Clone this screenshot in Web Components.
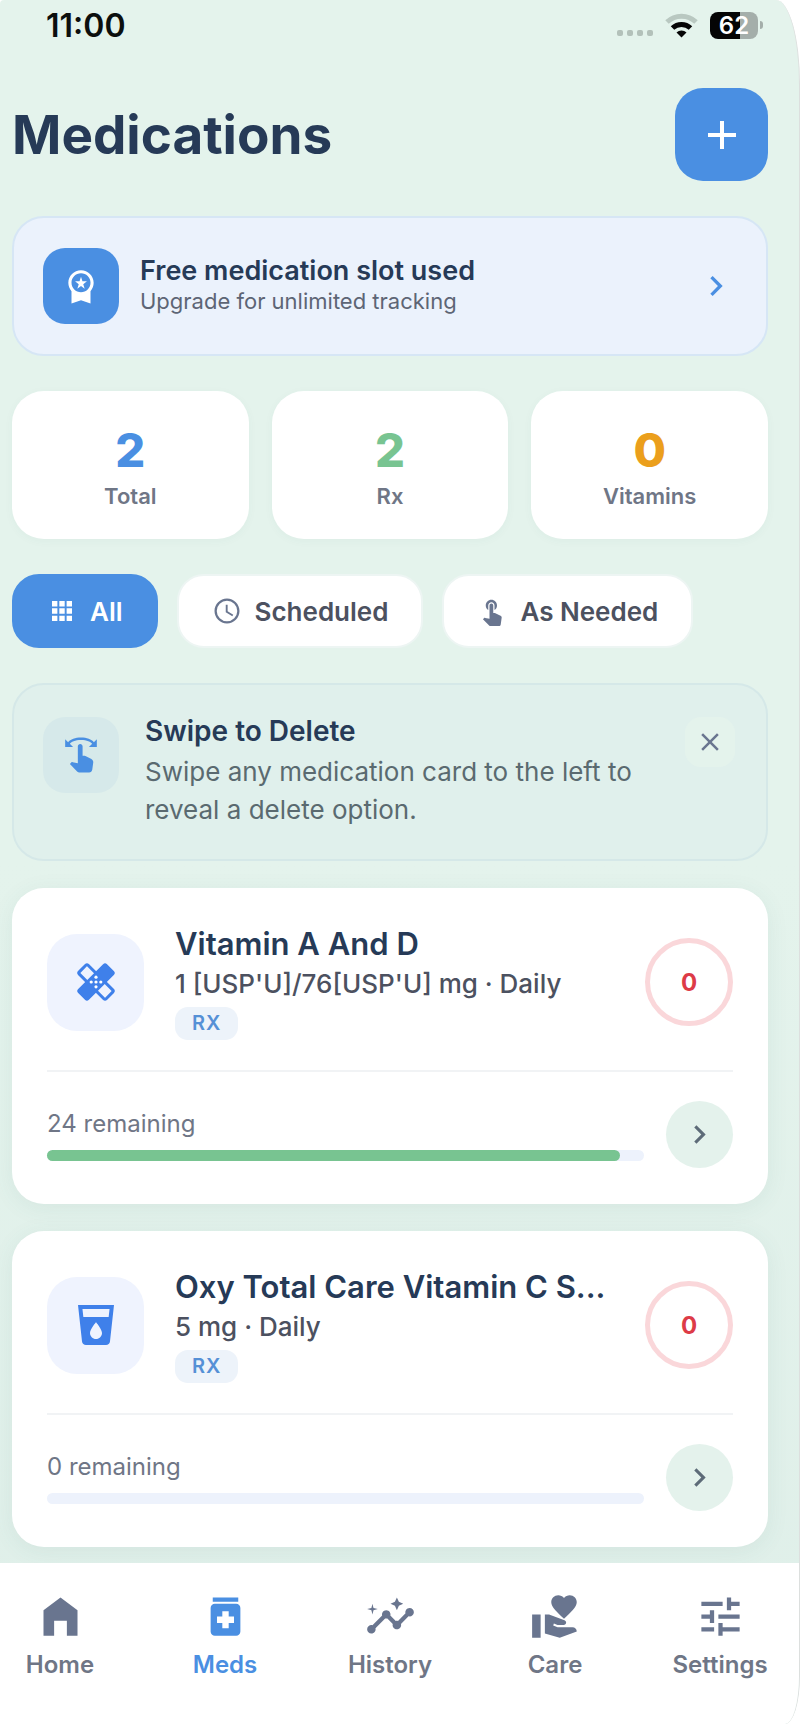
<!DOCTYPE html>
<html lang="en">
<head>
    <meta charset="UTF-8">
    <meta name="viewport" content="width=device-width, initial-scale=1.0">
    <title>Medications</title>
    <style>
        :root {
            --blue: #4a8fe2;
            --green: #78c491;
            --amber: #eb9f1c;
            --red: #dd3b47;
            --navy: #263a57;
            --text: #4c5160;
            --muted: #6f7686;
            --slate: #69758f;
            --mint: #e4f3ec;
        }

        body {
            margin: 0;
            background: #fff;
            font-family: Inter, "Liberation Sans", sans-serif;
            color: var(--text);
        }
    </style>
</head>
<body>
    <med-app>
        <status-bar slot="status" time="11:00" battery="62"></status-bar>
        <page-header>Medications</page-header>
        <upgrade-banner>
            Free medication slot used
            <span slot="detail">Upgrade for unlimited tracking</span>
        </upgrade-banner>
        <stat-row>
            <stat-card value="2" color="blue">Total</stat-card>
            <stat-card value="2" color="green">Rx</stat-card>
            <stat-card value="0" color="amber">Vitamins</stat-card>
        </stat-row>
        <filter-bar>
            <filter-chip icon="apps" active>All</filter-chip>
            <filter-chip icon="clock">Scheduled</filter-chip>
            <filter-chip icon="touch">As Needed</filter-chip>
        </filter-bar>
        <hint-card>
            <span slot="title">Swipe to Delete</span>
            Swipe any medication card to the left to reveal a delete option.
        </hint-card>
        <med-list>
            <med-card icon="bandage" tag="RX" streak="0" remaining="24" level="96">
                Vitamin A And D
                <span slot="dose">1 [USP'U]/76[USP'U] mg · Daily</span>
            </med-card>
            <med-card icon="drink" tag="RX" streak="0" remaining="0" level="0">
                Oxy Total Care Vitamin C S...
                <span slot="dose">5 mg · Daily</span>
            </med-card>
        </med-list>
        <tab-bar slot="tabs">
            <tab-item icon="home" href="#home">Home</tab-item>
            <tab-item icon="meds" href="#meds" active>Meds</tab-item>
            <tab-item icon="insights" href="#history">History</tab-item>
            <tab-item icon="care" href="#care">Care</tab-item>
            <tab-item icon="tune" href="#settings">Settings</tab-item>
        </tab-bar>
    </med-app>

    <script>
        const icons = {
            add: '<path d="M19 13h-6v6h-2v-6H5v-2h6V5h2v6h6z"/>',
            chevron: '<path d="M10 6 8.59 7.41 13.17 12l-4.58 4.59L10 18l6-6z"/>',
            close: '<path d="M19 6.41 17.59 5 12 10.59 6.41 5 5 6.41 10.59 12 5 17.59 6.41 19 12 13.41 17.59 19 19 17.59 13.41 12z"/>',
            premium: '<path d="M9.68 13.69 12 11.93l2.31 1.76-.88-2.85L15.75 9h-2.84L12 6.19 11.09 9H8.25l2.31 1.84zM20 10c0-4.42-3.58-8-8-8s-8 3.58-8 8c0 2.03.76 3.87 2 5.28V23l6-2 6 2v-7.72c1.24-1.41 2-3.25 2-5.28zm-8-6c3.31 0 6 2.69 6 6s-2.69 6-6 6-6-2.69-6-6 2.69-6 6-6z"/>',
            apps: '<path d="M4 4h4.3v4.3H4zM9.85 4h4.3v4.3h-4.3zM15.7 4H20v4.3h-4.3zM4 9.85h4.3v4.3H4zM9.85 9.85h4.3v4.3h-4.3zM15.7 9.85H20v4.3h-4.3zM4 15.7h4.3V20H4zM9.85 15.7h4.3V20h-4.3zM15.7 15.7H20V20h-4.3z"/>',
            clock: '<path d="M11.99 2C6.47 2 2 6.48 2 12s4.47 10 9.99 10C17.52 22 22 17.52 22 12S17.52 2 11.99 2zM12 20.2a8.2 8.2 0 1 1 0-16.4 8.2 8.2 0 0 1 0 16.4z"/><path d="M12.5 7H11v6l5.25 3.15.75-1.23-4.5-2.67z"/>',
            touch: '<path d="M9 11.24V7.5C9 6.12 10.12 5 11.5 5S14 6.12 14 7.5v3.74c1.21-.81 2-2.18 2-3.74C16 5.01 13.99 3 11.5 3S7 5.01 7 7.5c0 1.56.79 2.93 2 3.74zm9.84 4.63-4.54-2.26c-.17-.07-.35-.11-.54-.11H13v-6c0-.83-.67-1.5-1.5-1.5S10 6.67 10 7.5v10.74l-3.43-.72c-.08-.01-.15-.03-.24-.03-.31 0-.59.13-.79.33l-.79.8 4.94 4.94c.27.27.65.44 1.06.44h6.79c.75 0 1.33-.55 1.44-1.28l.75-5.27c.01-.07.02-.14.02-.2 0-.62-.38-1.16-.91-1.38z"/>',
            swipe: '<path d="m18.89 14.75-4.09-2.04c-.28-.14-.58-.21-.89-.21H13v-6c0-.83-.67-1.5-1.5-1.5S10 5.67 10 6.5v10.74l-3.25-.74c-.33-.07-.68.03-.92.28L5 17.62l4.54 4.79c.38.38.89.59 1.42.59h6.16c1 0 1.84-.73 1.98-1.72l.63-4.47c.12-.85-.32-1.69-1.09-2.06zM20.13 3.87C18.69 2.17 15.6 1 12 1S5.31 2.17 3.87 3.87L2 2v5h5L4.93 4.93C5.62 3.71 8.41 2.5 12 2.5s6.38 1.21 7.07 2.43L17 7h5V2z"/>',
            bandage: '<g transform="rotate(45 12 12)"><rect x="2.5" y="8.9" width="19" height="6.2" rx=".8" fill="none" stroke="currentColor" stroke-width="1.5"/></g><g transform="rotate(-45 12 12)"><rect x="1.8" y="8.2" width="20.4" height="7.6" rx="1.4"/></g><g fill="#fff"><circle cx="12" cy="12" r=".8"/><circle cx="12" cy="9.6" r=".8"/><circle cx="12" cy="14.4" r=".8"/><circle cx="9.6" cy="12" r=".8"/><circle cx="14.4" cy="12" r=".8"/></g>',
            drink: '<path d="m3 2 2.01 18.23C5.13 21.23 5.97 22 7 22h10c1.03 0 1.87-.77 1.99-1.77L21 2zm9 17c-1.66 0-3-1.34-3-3 0-2 3-5.4 3-5.4s3 3.4 3 5.4c0 1.66-1.34 3-3 3zm6.33-11H5.67l-.44-4h13.55z"/>',
            home: '<path d="M4 21V9l8-6 8 6v12h-5v-7H9v7z"/>',
            meds: '<path d="M6 3h12v2H6zM17 6H7c-1.1 0-2 .9-2 2v11c0 1.1.9 2 2 2h10c1.1 0 2-.9 2-2V8c0-1.1-.9-2-2-2zm-1 9h-2.5v2.5h-3V15H8v-3h2.5V9.5h3V12H16z"/>',
            insights: '<path d="M21 8c-1.45 0-2.26 1.44-1.93 2.51l-3.55 3.56c-.3-.09-.74-.09-1.04 0l-2.55-2.55C12.27 10.45 11.46 9 10 9c-1.45 0-2.27 1.44-1.93 2.52l-4.56 4.55C2.44 15.74 1 16.55 1 18c0 1.1.9 2 2 2 1.45 0 2.26-1.44 1.93-2.51l4.55-4.56c.3.09.74.09 1.04 0l2.55 2.55C12.73 16.55 13.54 18 15 18c1.45 0 2.27-1.44 1.93-2.52l3.56-3.55c1.07.33 2.51-.48 2.51-1.93 0-1.1-.9-2-2-2z"/><path d="m15 9 .94-2.07L18 6l-2.06-.93L15 3l-.92 2.07L12 6l2.08.93zM3.5 11 4 9l2-.5L4 8l-.5-2L3 8l-2 .5L3 9z"/>',
            care: '<path d="M1 11h4v11H1zM16 3.25C16.65 2.49 17.66 2 18.7 2 20.55 2 22 3.45 22 5.3c0 2.27-2.91 4.9-6 7.7-3.09-2.81-6-5.44-6-7.7C10 3.45 11.45 2 13.3 2c1.04 0 2.05.49 2.7 1.25zM20 17h-7l-2.09-.73.33-.94L13 16h2.82c.65 0 1.18-.53 1.18-1.18 0-.49-.31-.93-.77-1.11L8.97 11H7v9.02L14 22l8.01-3c-.01-1.1-.9-2-2.01-2z"/>',
            tune: '<path d="M3 17v2h6v-2zM3 5v2h10V5zm10 16v-2h8v-2h-8v-2h-2v6zM7 9v2H3v2h4v2h2V9zm14 4v-2H11v2zm-6-4h2V7h4V5h-4V3h-2z"/>'
        };

        const icon = (name, size) => `<svg width="${size}" height="${size}" viewBox="0 0 24 24" fill="currentColor" aria-hidden="true">${icons[name]}</svg>`;

        const base = `
            *, :host { box-sizing: border-box; }
            svg { display: block; flex: none; }
            button { font: inherit; border: 0; padding: 0; cursor: pointer; }
        `;

        // Renders the markup returned by template() into an open shadow root
        class BaseElement extends HTMLElement {
            constructor() {
                super();
                this.attachShadow({ mode: 'open' });
            }

            connectedCallback() {
                this.shadowRoot.innerHTML = `<style>${base}</style>${this.template()}`;
            }

            attr(name) {
                return this.getAttribute(name) || '';
            }
        }

        class MedApp extends BaseElement {
            template() {
                return `
                    <style>
                        :host {
                            display: flex;
                            flex-direction: column;
                            min-height: 100vh;
                            overflow: hidden;
                            background: linear-gradient(var(--mint) 50%, #dfefe9);
                            border-right: 1px solid #dcdfde;
                            border-radius: 4px 24px 15px 0 / 4px 84px 48px 0;
                        }
                        main {
                            display: flex;
                            flex-direction: column;
                            gap: 35px;
                            padding: 38px 31px 16px 12px;
                        }
                        slot[name="tabs"] { display: block; margin-top: auto; }
                    </style>
                    <slot name="status"></slot>
                    <main><slot></slot></main>
                    <slot name="tabs"></slot>
                `;
            }
        }

        class StatusBar extends BaseElement {
            template() {
                return `
                    <style>
                        :host {
                            display: flex;
                            align-items: center;
                            justify-content: space-between;
                            height: 50px;
                            padding: 0 36px 0 46px;
                            color: #0c0f0e;
                        }
                        time { font-size: 32px; font-weight: 600; }
                        .right { display: flex; align-items: center; gap: 12px; }
                        .battery {
                            display: flex;
                            align-items: center;
                            gap: 2px;
                        }
                        .level {
                            width: 48px;
                            height: 27px;
                            border-radius: 8px;
                            background: linear-gradient(90deg, #050505 ${this.attr('battery')}%, #a4aeaa 0);
                            color: #fff;
                            font-size: 24px;
                            font-weight: 600;
                            line-height: 27px;
                            text-align: center;
                        }
                        .tip { width: 3px; height: 8px; border-radius: 0 3px 3px 0; background: #a4aeaa; }
                    </style>
                    <time>${this.attr('time')}</time>
                    <div class="right">
                        <svg width="36" height="24" viewBox="0 0 36 24" fill="#b3c1ba" aria-hidden="true">
                            <rect y="17" width="6" height="6" rx="2"/><rect x="10" y="17" width="6" height="6" rx="2"/>
                            <rect x="20" y="17" width="6" height="6" rx="2"/><rect x="30" y="17" width="6" height="6" rx="2"/>
                        </svg>
                        <svg width="33" height="25" viewBox="0 0 33 25" fill="none" stroke-width="5" aria-hidden="true">
                            <path d="M2 9a21 21 0 0 1 29 0" stroke="#b9c8c1"/>
                            <path d="M7.5 15a13 13 0 0 1 18 0" stroke="#050505"/>
                            <path d="m16.5 24.5-5-5a7.5 7.5 0 0 1 10 0z" fill="#050505"/>
                        </svg>
                        <div class="battery"><div class="level">${this.attr('battery')}</div><div class="tip"></div></div>
                    </div>
                `;
            }
        }

        class PageHeader extends BaseElement {
            template() {
                return `
                    <style>
                        :host { display: flex; align-items: center; justify-content: space-between; }
                        h1 { margin: 0; color: var(--navy); font-size: 53px; font-weight: 700; line-height: 64px; }
                        button {
                            display: grid;
                            place-items: center;
                            width: 93px;
                            height: 93px;
                            border-radius: 28px;
                            background: var(--blue);
                            color: #fff;
                        }
                    </style>
                    <h1><slot></slot></h1>
                    <button type="button" aria-label="Add medication">${icon('add', 48)}</button>
                `;
            }
        }

        class UpgradeBanner extends BaseElement {
            template() {
                return `
                    <style>
                        :host { display: block; }
                        a {
                            display: flex;
                            align-items: center;
                            gap: 21px;
                            padding: 30px 30px 30px 29px;
                            border: 2px solid #d6e6f5;
                            border-radius: 32px;
                            background: #ebf2fc;
                            color: var(--blue);
                            text-decoration: none;
                        }
                        .badge {
                            display: grid;
                            place-items: center;
                            width: 76px;
                            height: 76px;
                            border-radius: 22px;
                            background: var(--blue);
                            color: #fff;
                        }
                        .copy { flex: 1; line-height: 30px; }
                        .title { color: var(--navy); font-size: 27px; font-weight: 600; }
                        .detail { color: #5d6575; font-size: 22px; }
                    </style>
                    <a href="#upgrade">
                        <div class="badge">${icon('premium', 38)}</div>
                        <div class="copy">
                            <div class="title"><slot></slot></div>
                            <div class="detail"><slot name="detail"></slot></div>
                        </div>
                        ${icon('chevron', 40)}
                    </a>
                `;
            }
        }

        class StatRow extends BaseElement {
            template() {
                return `
                    <style>
                        :host { display: grid; grid-template-columns: repeat(3, 1fr); gap: 23px; }
                    </style>
                    <slot></slot>
                `;
            }
        }

        class StatCard extends BaseElement {
            template() {
                return `
                    <style>
                        :host {
                            display: flex;
                            flex-direction: column;
                            align-items: center;
                            gap: 4px;
                            padding: 31px 12px 29px;
                            border-radius: 32px;
                            background: #fff;
                            box-shadow: 0 2px 10px rgba(60, 110, 100, .04);
                        }
                        .value { color: var(--${this.attr('color')}); font-size: 47px; font-weight: 800; line-height: 56px; }
                        .label { color: var(--muted); font-size: 22px; font-weight: 600; line-height: 28px; }
                    </style>
                    <div class="value">${this.attr('value')}</div>
                    <div class="label"><slot></slot></div>
                `;
            }
        }

        class FilterBar extends BaseElement {
            template() {
                return `
                    <style>
                        :host { display: flex; gap: 19px; }
                    </style>
                    <slot></slot>
                `;
            }
        }

        class FilterChip extends BaseElement {
            template() {
                return `
                    <style>
                        :host { display: block; }
                        button {
                            display: flex;
                            align-items: center;
                            gap: 13px;
                            height: 74px;
                            padding: 0 33px;
                            border: 2px solid #edf5f3;
                            border-radius: 27px;
                            background: #fff;
                            color: var(--text);
                            font-size: 26px;
                            font-weight: 600;
                        }
                        svg { color: var(--slate); }
                        :host([active]) button { border-color: var(--blue); background: var(--blue); color: #fff; }
                        :host([active]) svg { color: #fff; }
                    </style>
                    <button type="button">${icon(this.attr('icon'), 30)}<slot></slot></button>
                `;
            }
        }

        class HintCard extends BaseElement {
            template() {
                return `
                    <style>
                        :host {
                            display: flex;
                            align-items: flex-start;
                            gap: 26px;
                            padding: 32px 31px 30px 29px;
                            border: 2px solid #d5e8e8;
                            border-radius: 32px;
                            background: #e0f0ec;
                        }
                        .badge {
                            display: grid;
                            flex: none;
                            place-items: center;
                            width: 76px;
                            height: 76px;
                            border-radius: 22px;
                            background: #d6e9ea;
                            color: var(--blue);
                        }
                        .copy { flex: 1; }
                        h2 { margin: 0 0 8px; color: var(--navy); font-size: 28px; font-weight: 600; line-height: 28px; }
                        p { margin: 0; color: #5a6a70; font-size: 26px; line-height: 38px; }
                        button {
                            display: grid;
                            place-items: center;
                            width: 50px;
                            height: 50px;
                            border-radius: 16px;
                            background: var(--mint);
                            color: var(--slate);
                        }
                    </style>
                    <div class="badge">${icon('swipe', 38)}</div>
                    <div class="copy">
                        <h2><slot name="title"></slot></h2>
                        <p><slot></slot></p>
                    </div>
                    <button type="button" aria-label="Dismiss">${icon('close', 30)}</button>
                `;
            }
        }

        class MedList extends BaseElement {
            template() {
                // the list sits closer to the hint above than the other sections do
                return `
                    <style>
                        :host { display: flex; flex-direction: column; gap: 27px; margin-top: -8px; }
                    </style>
                    <slot></slot>
                `;
            }
        }

        class MedCard extends BaseElement {
            template() {
                return `
                    <style>
                        :host {
                            display: block;
                            padding: 36px 35px;
                            border-radius: 32px;
                            background: #fff;
                            box-shadow: 0 4px 22px rgba(60, 110, 110, .08);
                        }
                        .top { display: flex; align-items: center; }
                        .icon {
                            display: grid;
                            flex: none;
                            place-items: center;
                            width: 97px;
                            height: 97px;
                            margin-right: 31px;
                            border-radius: 30px;
                            background: #eff3fe;
                            color: #3f80ea;
                        }
                        .copy { flex: 1; min-width: 0; }
                        h3, .dose { overflow: hidden; line-height: 40px; text-overflow: ellipsis; white-space: nowrap; }
                        h3 { margin: 0; color: var(--navy); font-size: 31px; font-weight: 600; }
                        .dose { font-size: 26px; font-weight: 500; }
                        .tag {
                            display: block;
                            width: max-content;
                            margin-top: 3px;
                            padding: 0 17px;
                            border-radius: 13px;
                            background: #edf3fa;
                            color: #5590d6;
                            font-size: 20px;
                            font-weight: 600;
                            letter-spacing: 1px;
                            line-height: 33px;
                        }
                        .streak {
                            display: grid;
                            flex: none;
                            place-items: center;
                            width: 88px;
                            height: 88px;
                            border: 5px solid #fad7da;
                            border-radius: 50%;
                            color: var(--red);
                            font-size: 24px;
                            font-weight: 700;
                        }
                        .bottom {
                            display: flex;
                            align-items: center;
                            gap: 22px;
                            margin-top: 30px;
                            padding-top: 29px;
                            border-top: 2px solid #f1f3f5;
                        }
                        .supply { flex: 1; }
                        .left { color: var(--muted); font-size: 24px; line-height: 32px; }
                        .bar { height: 11px; margin-top: 10px; border-radius: 6px; background: #edf2fc; }
                        .fill { width: ${this.attr('level')}%; height: 11px; border-radius: 6px; background: var(--green); }
                        button {
                            display: grid;
                            place-items: center;
                            width: 67px;
                            height: 67px;
                            border-radius: 50%;
                            background: #e4f2ec;
                            color: #5d6b78;
                        }
                    </style>
                    <div class="top">
                        <div class="icon">${icon(this.attr('icon'), 48)}</div>
                        <div class="copy">
                            <h3><slot></slot></h3>
                            <div class="dose"><slot name="dose"></slot></div>
                            <span class="tag">${this.attr('tag')}</span>
                        </div>
                        <div class="streak">${this.attr('streak')}</div>
                    </div>
                    <div class="bottom">
                        <div class="supply">
                            <div class="left">${this.attr('remaining')} remaining</div>
                            <div class="bar"><div class="fill"></div></div>
                        </div>
                        <button type="button" aria-label="Open">${icon('chevron', 37)}</button>
                    </div>
                `;
            }
        }

        class TabBar extends BaseElement {
            template() {
                return `
                    <style>
                        :host { display: block; background: #fff; }
                        nav { display: flex; justify-content: space-between; padding: 28px 19px 44px 0; }
                    </style>
                    <nav><slot></slot></nav>
                `;
            }
        }

        class TabItem extends BaseElement {
            template() {
                return `
                    <style>
                        :host { display: block; width: 120px; }
                        a {
                            display: flex;
                            flex-direction: column;
                            align-items: center;
                            gap: 8px;
                            color: var(--muted);
                            font-size: 24px;
                            font-weight: 600;
                            line-height: 30px;
                            text-decoration: none;
                        }
                        svg { color: var(--slate); }
                        :host([active]) a, :host([active]) svg { color: var(--blue); }
                    </style>
                    <a href="${this.attr('href')}">${icon(this.attr('icon'), 51)}<span><slot></slot></span></a>
                `;
            }
        }

        customElements.define('med-app', MedApp);
        customElements.define('status-bar', StatusBar);
        customElements.define('page-header', PageHeader);
        customElements.define('upgrade-banner', UpgradeBanner);
        customElements.define('stat-row', StatRow);
        customElements.define('stat-card', StatCard);
        customElements.define('filter-bar', FilterBar);
        customElements.define('filter-chip', FilterChip);
        customElements.define('hint-card', HintCard);
        customElements.define('med-list', MedList);
        customElements.define('med-card', MedCard);
        customElements.define('tab-bar', TabBar);
        customElements.define('tab-item', TabItem);
    </script>
</body>
</html>
